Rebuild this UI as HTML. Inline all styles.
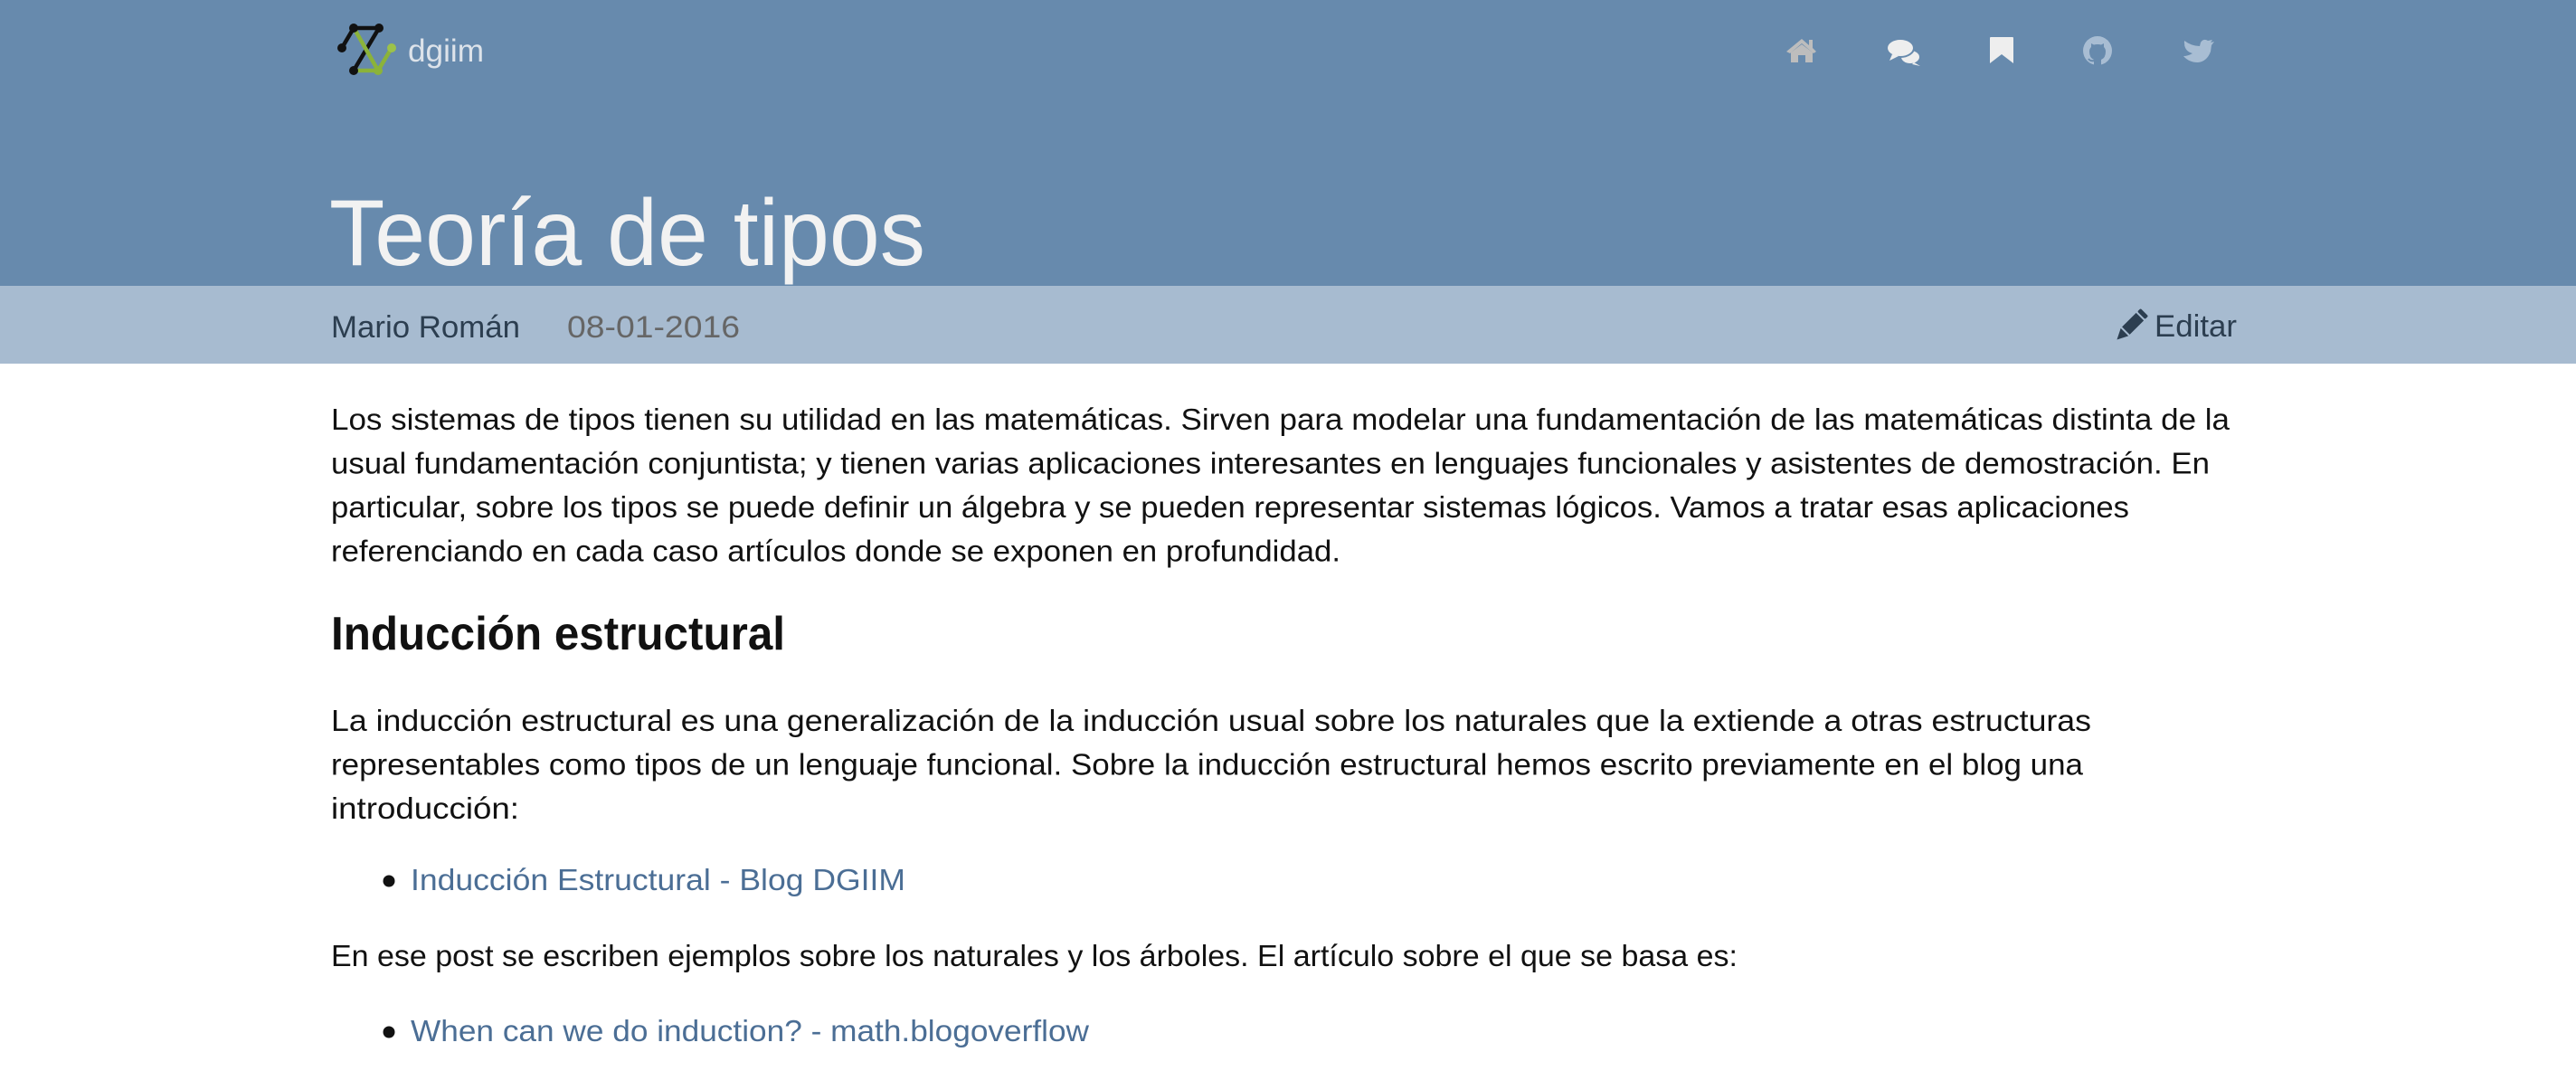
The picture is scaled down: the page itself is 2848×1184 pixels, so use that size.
<!DOCTYPE html>
<html><head><meta charset="utf-8"><style>
html,body{margin:0;padding:0;width:2848px;height:1184px;overflow:hidden;background:#fff}
svg{display:block}
text{font-family:"Liberation Sans",sans-serif}
</style></head><body>
<svg width="2848" height="1184" viewBox="0 0 2848 1184" xmlns="http://www.w3.org/2000/svg">
<rect x="0" y="0" width="2848" height="316" fill="#678aad"/>
<rect x="0" y="316" width="2848" height="86" fill="#a7bbd0"/>
<!-- logo -->
<g stroke-linecap="round" fill="none">
<polyline points="378,53 391,31 419,31 391,78" stroke="#111" stroke-width="4.5"/>
<polyline points="393,34 418,78 433,53" stroke="#8bb33a" stroke-width="4.5"/>
<line x1="391" y1="78" x2="418" y2="78" stroke="#8bb33a" stroke-width="4.5"/>
</g>
<circle cx="391" cy="31" r="5" fill="#111"/><circle cx="419" cy="31" r="5" fill="#111"/>
<circle cx="378" cy="53" r="5" fill="#111"/><circle cx="391" cy="78" r="5" fill="#111"/>
<circle cx="418" cy="78" r="5" fill="#8bb33a"/><circle cx="433" cy="53" r="5" fill="#9cc24a"/>
<text x="451" y="68" font-size="35" fill="#dde3ea" textLength="84" lengthAdjust="spacingAndGlyphs">dgiim</text>
<!-- home -->
<path d="M1975,57 L1992,43 L2000,50 L2000,44 L2004,44 L2004,53 L2008,57 L2005,59 L1992,48 L1979,59 Z" fill="#bdbdbd"/>
<path d="M1980,58 L1992,49 L2004,58 L2004,69 L1996,69 L1996,61 L1988,61 L1988,69 L1980,69 Z" fill="#bdbdbd"/>
<!-- chat -->
<ellipse cx="2112" cy="63" rx="11" ry="8" fill="#eee" stroke="#678aad" stroke-width="2"/>
<path d="M2116,69 L2123,73 L2114,71 Z" fill="#eee"/>
<ellipse cx="2101" cy="53" rx="15" ry="10" fill="#eee" stroke="#678aad" stroke-width="2"/>
<path d="M2092,60 L2089,67 L2099,62 Z" fill="#eee"/>
<!-- bookmark -->
<path d="M2201,41 L2225,41 Q2226,41 2226,42 L2226,70 L2213,60 L2200,70 L2200,42 Q2200,41 2201,41 Z" fill="#eee"/>
<!-- github -->
<circle cx="2319" cy="56" r="16" fill="#a8bdd3"/>
<path d="M2315,72 L2315,66 Q2310,64 2310,57 Q2310,54 2312,52 L2312,48 L2315,49.5 Q2319,48.5 2323,49.5 L2326,48 L2326,52 Q2328,54 2328,57 Q2328,64 2323,66 L2323,72 Z" fill="#678aad"/>
<path d="M2315,67 Q2311,68 2309,65" stroke="#678aad" stroke-width="2" fill="none"/>
<!-- twitter -->
<path d="M2415,49 Q2416,57 2424,59 Q2419,62 2414,62 Q2420,69 2430,69 Q2440,68 2444,57 L2445,50 L2448,46 L2444,47 L2446,44 L2441,45 Q2436,42 2433,47 L2432,51 Q2423,51 2415,45 Q2414,50 2419,54 Z" fill="#a8bdd3"/>
<!-- title -->
<text x="364" y="293" font-size="104" fill="#f2f2f2" textLength="659" lengthAdjust="spacingAndGlyphs">Teoría de tipos</text>
<text x="366" y="373" font-size="34" fill="#2c3e50" textLength="209" lengthAdjust="spacingAndGlyphs">Mario Román</text>
<text x="627" y="373" font-size="34" fill="#666" textLength="191" lengthAdjust="spacingAndGlyphs">08-01-2016</text>
<!-- pencil -->
<g transform="rotate(45 2356 360)" fill="#2c3e50">
<rect x="2350" y="339" width="12" height="5" rx="1.5"/>
<rect x="2350" y="346" width="12" height="22"/>
<path d="M2350,370 L2362,370 L2356,382 Z"/>
</g>
<text x="2382" y="372" font-size="34" fill="#2c3e50" textLength="91" lengthAdjust="spacingAndGlyphs">Editar</text>
<!-- body -->
<g font-size="33" fill="#111">
<text x="366" y="475" textLength="2099" lengthAdjust="spacingAndGlyphs">Los sistemas de tipos tienen su utilidad en las matemáticas. Sirven para modelar una fundamentación de las matemáticas distinta de la</text>
<text x="366" y="523.5" textLength="2077" lengthAdjust="spacingAndGlyphs">usual fundamentación conjuntista; y tienen varias aplicaciones interesantes en lenguajes funcionales y asistentes de demostración. En</text>
<text x="366" y="572" textLength="1988" lengthAdjust="spacingAndGlyphs">particular, sobre los tipos se puede definir un álgebra y se pueden representar sistemas lógicos. Vamos a tratar esas aplicaciones</text>
<text x="366" y="620.5" textLength="1116" lengthAdjust="spacingAndGlyphs">referenciando en cada caso artículos donde se exponen en profundidad.</text>
<text x="366" y="808" textLength="1946" lengthAdjust="spacingAndGlyphs">La inducción estructural es una generalización de la inducción usual sobre los naturales que la extiende a otras estructuras</text>
<text x="366" y="856.5" textLength="1937" lengthAdjust="spacingAndGlyphs">representables como tipos de un lenguaje funcional. Sobre la inducción estructural hemos escrito previamente en el blog una</text>
<text x="366" y="905" textLength="208" lengthAdjust="spacingAndGlyphs">introducción:</text>
<text x="366" y="1068" textLength="1555" lengthAdjust="spacingAndGlyphs">En ese post se escriben ejemplos sobre los naturales y los árboles. El artículo sobre el que se basa es:</text>
</g>
<text x="366" y="718" font-size="52" font-weight="bold" fill="#111" textLength="502" lengthAdjust="spacingAndGlyphs">Inducción estructural</text>
<circle cx="430" cy="974" r="6.5" fill="#111"/>
<circle cx="430" cy="1141" r="6.5" fill="#111"/>
<g font-size="33" fill="#4b6e95">
<text x="454" y="984" textLength="547" lengthAdjust="spacingAndGlyphs">Inducción Estructural - Blog DGIIM</text>
<text x="454" y="1151" textLength="750" lengthAdjust="spacingAndGlyphs">When can we do induction? - math.blogoverflow</text>
</g>
</svg>
</body></html>
